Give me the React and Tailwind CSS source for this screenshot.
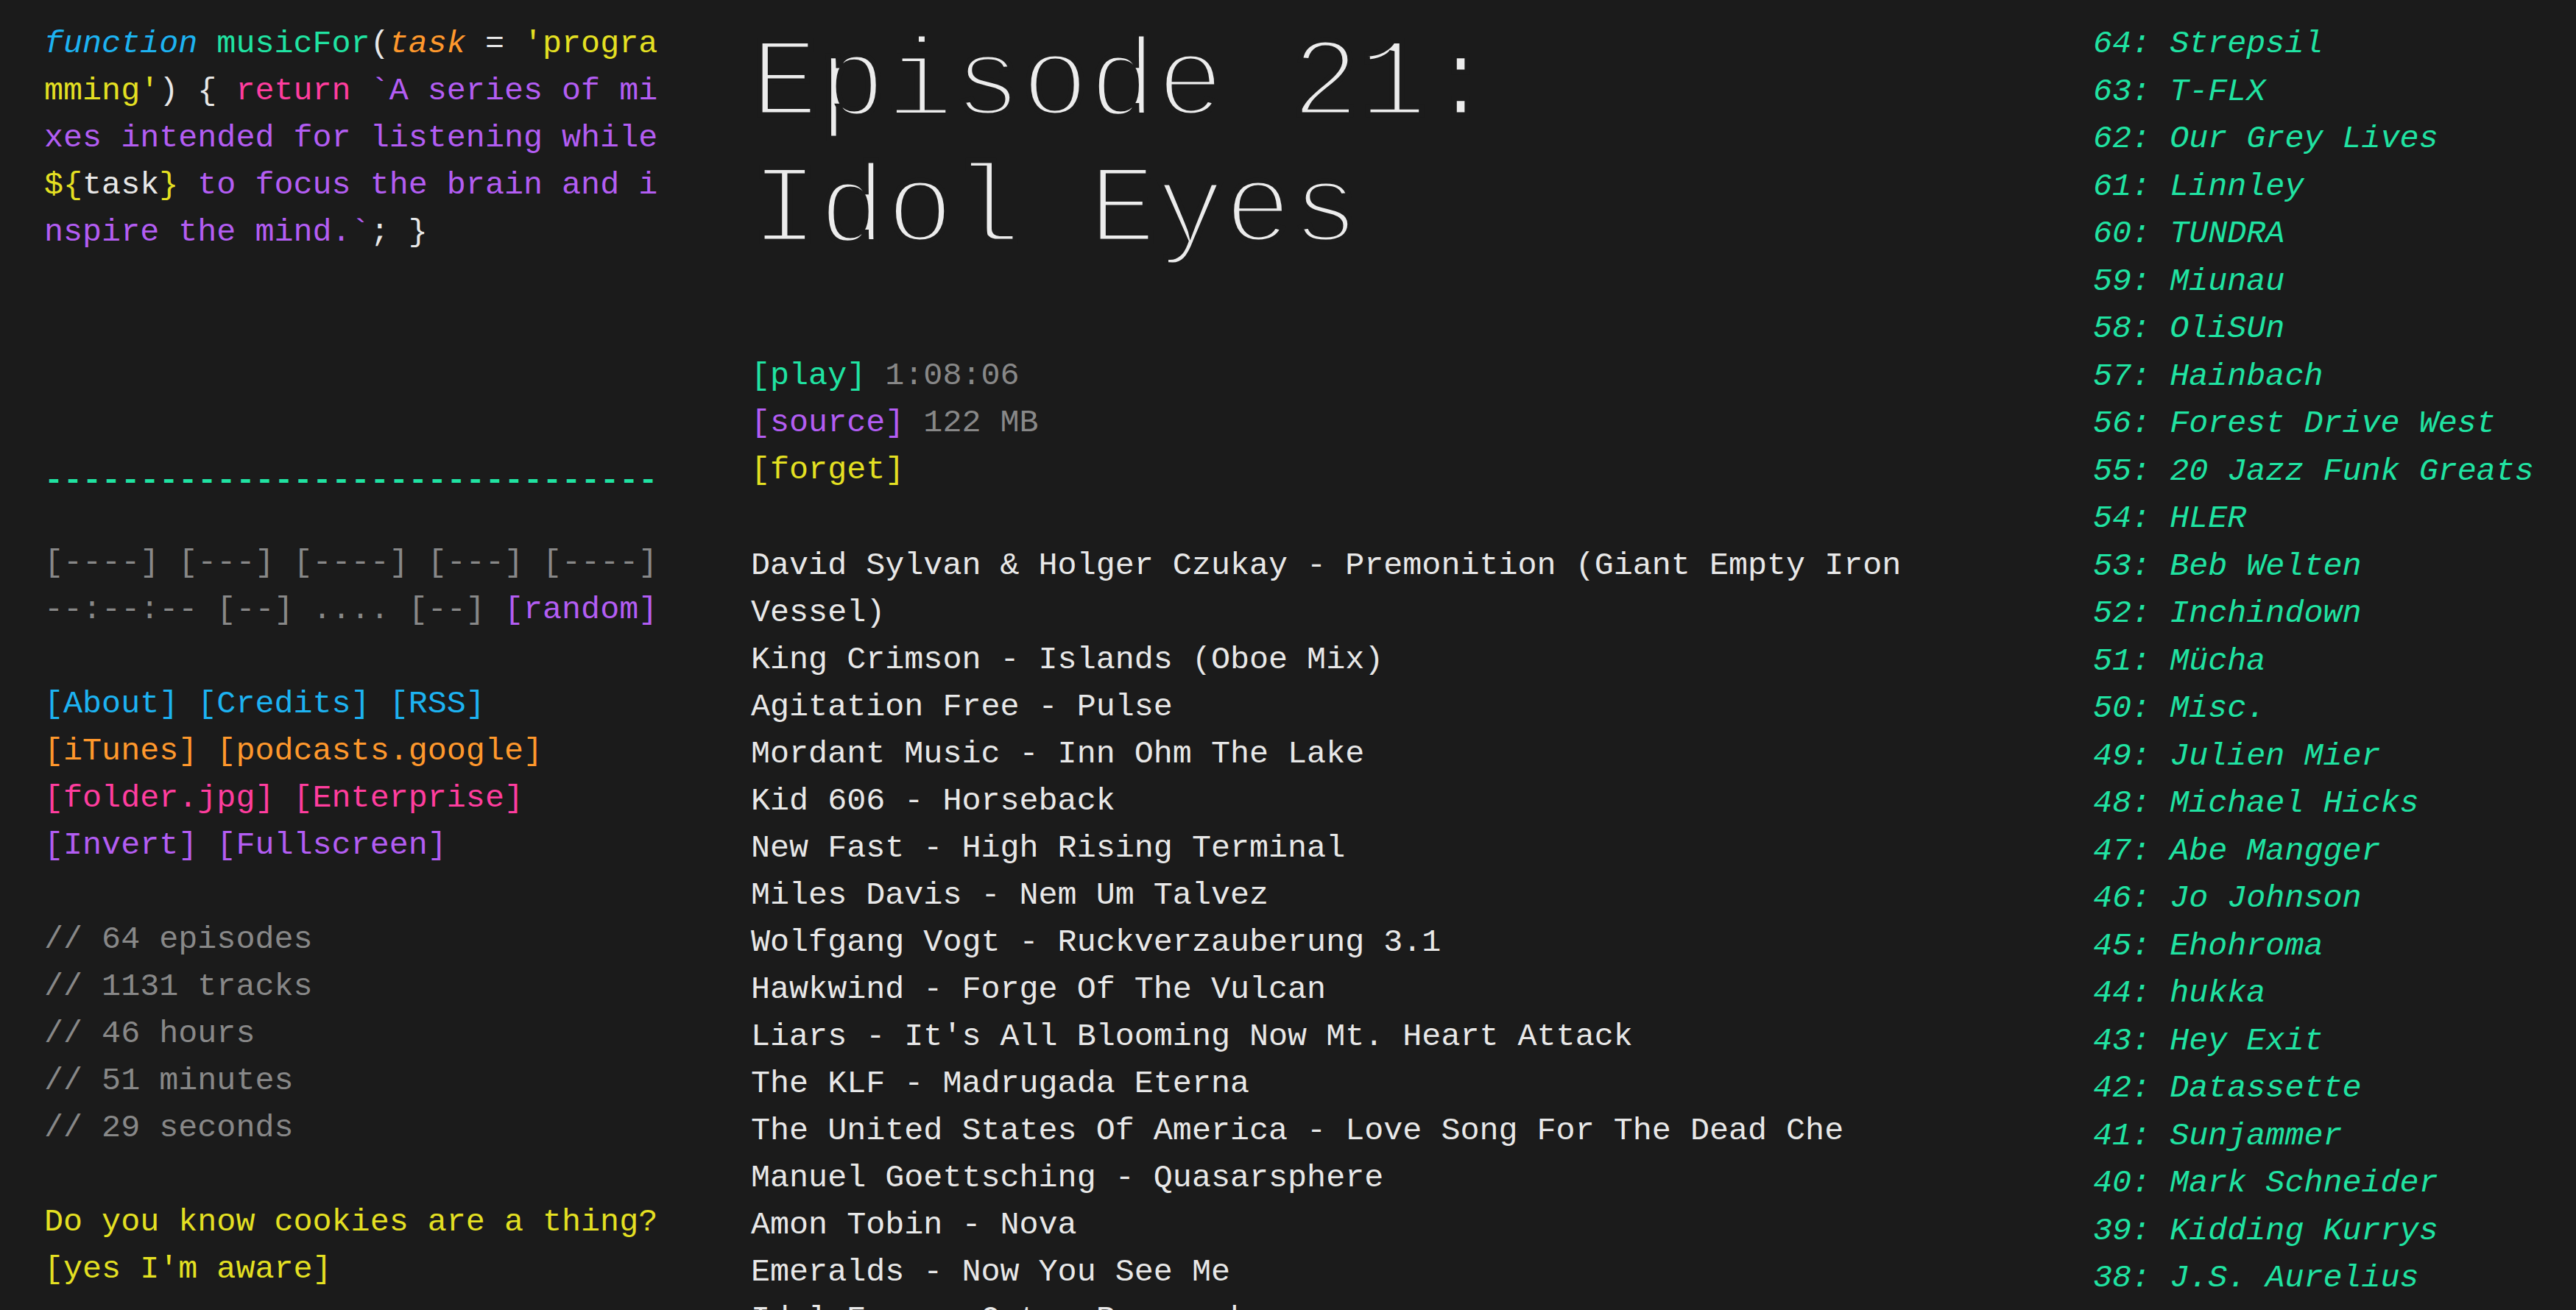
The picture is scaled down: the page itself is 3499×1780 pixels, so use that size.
import React from "react";

const episodes = [
  "64: Strepsil",
  "63: T-FLX",
  "62: Our Grey Lives",
  "61: Linnley",
  "60: TUNDRA",
  "59: Miunau",
  "58: OliSUn",
  "57: Hainbach",
  "56: Forest Drive West",
  "55: 20 Jazz Funk Greats",
  "54: HLER",
  "53: Beb Welten",
  "52: Inchindown",
  "51: Mücha",
  "50: Misc.",
  "49: Julien Mier",
  "48: Michael Hicks",
  "47: Abe Mangger",
  "46: Jo Johnson",
  "45: Ehohroma",
  "44: hukka",
  "43: Hey Exit",
  "42: Datassette",
  "41: Sunjammer",
  "40: Mark Schneider",
  "39: Kidding Kurrys",
  "38: J.S. Aurelius",
  "37: Glimmer",
];

const tracks = [
  "David Sylvan & Holger Czukay - Premonition (Giant Empty Iron Vessel)",
  "King Crimson - Islands (Oboe Mix)",
  "Agitation Free - Pulse",
  "Mordant Music - Inn Ohm The Lake",
  "Kid 606 - Horseback",
  "New Fast - High Rising Terminal",
  "Miles Davis - Nem Um Talvez",
  "Wolfgang Vogt - Ruckverzauberung 3.1",
  "Hawkwind - Forge Of The Vulcan",
  "Liars - It's All Blooming Now Mt. Heart Attack",
  "The KLF - Madrugada Eterna",
  "The United States Of America - Love Song For The Dead Che",
  "Manuel Goettsching - Quasarsphere",
  "Amon Tobin - Nova",
  "Emeralds - Now You See Me",
  "Idol Eyes - Outer Research",
];

export default function App() {
  return (
    <div className="h-[1780px] w-[3499px] overflow-hidden bg-[#1b1b1b] font-['Liberation_Mono',monospace] text-[43.4px] leading-[64px] text-[#e8e8e8]">
      <div className="flex pl-[60px]">
        {/* Left column */}
        <div className="w-[842px] shrink-0 pt-[28px]">
          <div className="break-all">
            <span className="italic text-[#1db3f2]">function</span>
            <span className="text-[#20e3a2]"> musicFor</span>
            <span className="text-[#e8e8e8]">(</span>
            <span className="italic text-[#ff982c]">task</span>
            <span className="text-[#e8e8e8]"> = </span>
            <span className="text-[#e4e022]">'programming'</span>
            <span className="text-[#e8e8e8]">) {"{"} </span>
            <span className="text-[#ff3d9e]">return</span>
            <span className="text-[#b35df3]"> `A series of mixes intended for listening while </span>
            <span className="text-[#e4e022]">{"${"}</span>
            <span className="text-[#e8e8e8]">task</span>
            <span className="text-[#e4e022]">{"}"}</span>
            <span className="text-[#b35df3]"> to focus the brain and inspire the mind.`</span>
            <span className="text-[#e8e8e8]">; {"}"}</span>
          </div>

          <div className="mt-[274px] font-bold text-[#20e3a2]">--------------------------------</div>

          <div className="mt-[47px] text-[#888888]">
            <div>[----] [---] [----] [---] [----]</div>
            <div>
              --:--:-- [--] .... [--] <span className="text-[#b35df3]">[random]</span>
            </div>
          </div>

          <div className="mt-[64px]">
            <div className="text-[#1db3f2]">[About] [Credits] [RSS]</div>
            <div className="text-[#ff982c]">[iTunes] [podcasts.google]</div>
            <div className="text-[#ff3d9e]">[folder.jpg] [Enterprise]</div>
            <div className="text-[#b35df3]">[Invert] [Fullscreen]</div>
          </div>

          <div className="mt-[64px] text-[#888888]">
            <div>// 64 episodes</div>
            <div>// 1131 tracks</div>
            <div>// 46 hours</div>
            <div>// 51 minutes</div>
            <div>// 29 seconds</div>
          </div>

          <div className="mt-[64px] text-[#e4e022]">
            <div>Do you know cookies are a thing?</div>
            <div>[yes I'm aware]</div>
          </div>
        </div>

        {/* Center column */}
        <div className="ml-[118px] w-[1695px] shrink-0 pt-[30px]">
          <h1 className="text-[153px] leading-[172px] font-normal text-[#ececec] [-webkit-text-stroke:7px_#1b1b1b]">
            <div>Episode 21:</div>
            <div>Idol Eyes</div>
          </h1>

          <div className="mt-[105px]">
            <div>
              <span className="text-[#20e3a2]">[play]</span> <span className="text-[#888888]">1:08:06</span>
            </div>
            <div>
              <span className="text-[#b35df3]">[source]</span> <span className="text-[#888888]">122 MB</span>
            </div>
            <div className="text-[#e4e022]">[forget]</div>
          </div>

          <div className="mt-[66px]">
            {tracks.map((t) => (
              <div key={t}>{t}</div>
            ))}
          </div>
        </div>

        {/* Right column */}
        <div className="ml-[128px] shrink-0 pt-[28px] italic leading-[64.5px] text-[#20e3a2]">
          {episodes.map((e) => (
            <div key={e}>{e}</div>
          ))}
        </div>
      </div>
    </div>
  );
}
